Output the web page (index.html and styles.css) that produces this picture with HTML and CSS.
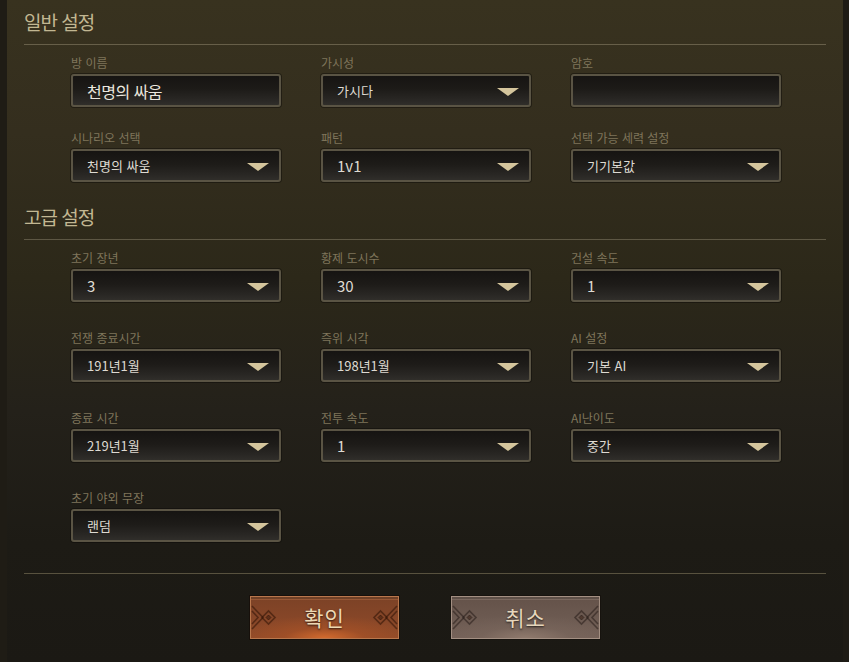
FILE: index.html
```html
<!DOCTYPE html>
<html lang="ko">
<head>
<meta charset="utf-8">
<title>방 설정</title>
<link rel="stylesheet" href="styles.css">
</head>
<body>
<div class="frame">
  <section class="group">
    <h2 class="group-title">일반 설정</h2>
    <div class="grid grid-basic">
      <div class="field"><span class="label">방 이름</span><div class="box input"><span class="value big">천명의 싸움</span></div></div>
      <div class="field"><span class="label">가시성</span><div class="box select"><span class="value">가시다</span><span class="arrow"></span></div></div>
      <div class="field"><span class="label">암호</span><div class="box input"></div></div>
      <div class="field"><span class="label">시나리오 선택</span><div class="box select"><span class="value">천명의 싸움</span><span class="arrow"></span></div></div>
      <div class="field"><span class="label">패턴</span><div class="box select"><span class="value num">1v1</span><span class="arrow"></span></div></div>
      <div class="field"><span class="label">선택 가능 세력 설정</span><div class="box select"><span class="value">기기본값</span><span class="arrow"></span></div></div>
    </div>
  </section>
  <section class="group group-adv">
    <h2 class="group-title">고급 설정</h2>
    <div class="grid grid-adv">
      <div class="field"><span class="label">초기 장년</span><div class="box select"><span class="value num">3</span><span class="arrow"></span></div></div>
      <div class="field"><span class="label">황제 도시수</span><div class="box select"><span class="value num">30</span><span class="arrow"></span></div></div>
      <div class="field"><span class="label">건설 속도</span><div class="box select"><span class="value num">1</span><span class="arrow"></span></div></div>
      <div class="field"><span class="label">전쟁 종료시간</span><div class="box select"><span class="value">191년1월</span><span class="arrow"></span></div></div>
      <div class="field"><span class="label">즉위 시각</span><div class="box select"><span class="value">198년1월</span><span class="arrow"></span></div></div>
      <div class="field"><span class="label">AI 설정</span><div class="box select"><span class="value">기본 AI</span><span class="arrow"></span></div></div>
      <div class="field"><span class="label">종료 시간</span><div class="box select"><span class="value">219년1월</span><span class="arrow"></span></div></div>
      <div class="field"><span class="label">전투 속도</span><div class="box select"><span class="value num">1</span><span class="arrow"></span></div></div>
      <div class="field"><span class="label">AI난이도</span><div class="box select"><span class="value">중간</span><span class="arrow"></span></div></div>
      <div class="field"><span class="label">초기 야외 무장</span><div class="box select"><span class="value">랜덤</span><span class="arrow"></span></div></div>
    </div>
  </section>
  <div class="footer">
    <button class="btn btn-ok">
      <svg class="orn orn-l" viewBox="0 0 30 43" width="30" height="43"><path d="M1 10 L12 21.5 L1 33" /><path d="M1 15 L7 21.5 L1 28" /><path d="M11 21.5 L17.5 15 L24 21.5 L17.5 28 Z" /><path class="fill" d="M15 21.5 L17.5 19 L20 21.5 L17.5 24 Z" /></svg>
      <span class="btn-text">확인</span>
      <svg class="orn orn-r" viewBox="0 0 30 43" width="30" height="43"><path d="M1 10 L12 21.5 L1 33" /><path d="M1 15 L7 21.5 L1 28" /><path d="M11 21.5 L17.5 15 L24 21.5 L17.5 28 Z" /><path class="fill" d="M15 21.5 L17.5 19 L20 21.5 L17.5 24 Z" /></svg>
    </button>
    <button class="btn btn-cancel">
      <svg class="orn orn-l" viewBox="0 0 30 43" width="30" height="43"><path d="M1 10 L12 21.5 L1 33" /><path d="M1 15 L7 21.5 L1 28" /><path d="M11 21.5 L17.5 15 L24 21.5 L17.5 28 Z" /><path class="fill" d="M15 21.5 L17.5 19 L20 21.5 L17.5 24 Z" /></svg>
      <span class="btn-text">취소</span>
      <svg class="orn orn-r" viewBox="0 0 30 43" width="30" height="43"><path d="M1 10 L12 21.5 L1 33" /><path d="M1 15 L7 21.5 L1 28" /><path d="M11 21.5 L17.5 15 L24 21.5 L17.5 28 Z" /><path class="fill" d="M15 21.5 L17.5 19 L20 21.5 L17.5 24 Z" /></svg>
    </button>
  </div>
</div>
</body>
</html>
```
FILE: styles.css
```css
* { box-sizing: border-box; }
html, body {
  margin: 0;
  padding: 0;
  width: 849px;
  height: 662px;
  overflow: hidden;
  background: #1c1a14;
  font-family: "Noto Sans CJK KR", "Noto Sans", sans-serif;
}
.frame {
  width: 849px;
  height: 662px;
  border-left: 7px solid #1f1c15;
  border-right: 6px solid #1e1b15;
  padding: 9px 17px 0 17px;
  background: linear-gradient(180deg, #38321f 0%, #342e1e 20%, #2c2819 42%, #24211a 62%, #1d1b15 82%, #1b1914 100%);
}
.group-title {
  margin: 0;
  font-size: 19px;
  font-weight: normal;
  letter-spacing: -1px;
  line-height: 26px;
  color: #c2b792;
  padding-bottom: 9px;
  border-bottom: 1px solid #675f49;
}
.group-adv { margin-top: 22px; }
.group-adv .group-title { border-bottom-color: #5d5744; }
.grid {
  display: grid;
  grid-template-columns: repeat(3, 210px);
  column-gap: 40px;
  padding: 10px 0 0 47px;
}
.grid-basic { row-gap: 23px; }
.grid-adv { row-gap: 28px; }
.field {
  display: flex;
  flex-direction: column;
}
.label {
  font-size: 12px;
  line-height: 16px;
  height: 16px;
  margin-bottom: 3px;
  color: #7f755b;
  white-space: nowrap;
}
.box {
  position: relative;
  height: 33px;
  border: 2px solid #5a5444;
  border-radius: 3px;
  background: linear-gradient(180deg, #161412 0%, #1d1b18 45%, #2a2825 85%, #302e2a 100%);
  box-shadow: 0 0 0 1px rgba(10, 9, 6, 0.45);
  display: flex;
  align-items: center;
  padding-left: 14px;
}
.value {
  font-size: 13px;
  color: #dedad2;
  white-space: nowrap;
}
.value.num { font-size: 15px; }
.value.big { font-size: 16px; letter-spacing: -0.5px; color: #ebe7df; }
.arrow {
  position: absolute;
  right: 10px;
  top: 12px;
  width: 0;
  height: 0;
  border-left: 11px solid transparent;
  border-right: 11px solid transparent;
  border-top: 8px solid #d4c59c;
}
.footer {
  margin-top: 31px;
  border-top: 1px solid #58523f;
  padding-top: 22px;
  display: flex;
  justify-content: center;
  gap: 52px;
}
.btn {
  position: relative;
  width: 149px;
  height: 43px;
  padding: 0;
  margin: 0;
  border: 1px solid #b9774c;
  display: flex;
  align-items: center;
  justify-content: center;
  font-family: inherit;
  cursor: pointer;
}
.btn-ok {
  background:
    radial-gradient(ellipse 60% 55% at 50% 100%, rgba(214, 108, 46, 0.95) 0%, rgba(170, 82, 38, 0.6) 45%, rgba(140, 70, 36, 0) 100%),
    linear-gradient(180deg, #7c4226 0%, #864628 50%, #8f4b29 100%);
  box-shadow: inset 0 2px 0 rgba(0,0,0,0.25), inset 0 3px 0 rgba(230, 150, 100, 0.25), 0 0 0 1px rgba(20, 10, 5, 0.6);
}
.btn-cancel {
  border-color: #a38f82;
  background:
    radial-gradient(ellipse 60% 55% at 50% 100%, rgba(150, 128, 114, 0.8) 0%, rgba(125, 106, 95, 0.4) 50%, rgba(110, 94, 85, 0) 100%),
    linear-gradient(180deg, #645249 0%, #6c5a51 50%, #746158 100%);
  box-shadow: inset 0 2px 0 rgba(0,0,0,0.22), inset 0 3px 0 rgba(210, 190, 175, 0.2), 0 0 0 1px rgba(20, 15, 10, 0.6);
}
.btn-text {
  font-size: 21px;
  line-height: 1;
  color: #eed9b4;
  letter-spacing: 1px;
  text-shadow: 0 1px 2px rgba(0, 0, 0, 0.7);
}
.btn-cancel .btn-text { color: #e6d6bc; }
.orn {
  position: absolute;
  top: -1px;
  fill: none;
  stroke: rgba(45, 18, 6, 0.55);
  stroke-width: 1.6;
}
.btn-cancel .orn { stroke: rgba(40, 30, 25, 0.55); }
.orn .fill { fill: rgba(45, 18, 6, 0.45); stroke-width: 1; }
.orn-l { left: 0; }
.orn-r { right: 0; transform: scaleX(-1); }
```
